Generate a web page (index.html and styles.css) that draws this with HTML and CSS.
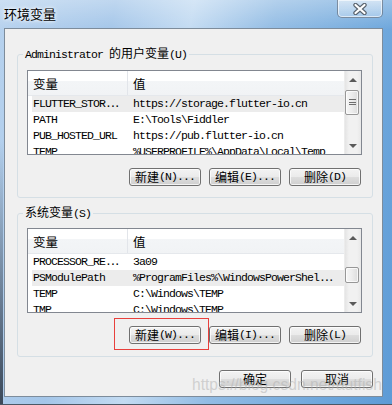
FILE: index.html
```html
<!DOCTYPE html>
<html lang="zh-CN">
<head>
    <meta charset="UTF-8">
    <meta name="viewport" content="width=device-width, initial-scale=1.0">
    <title>环境变量</title>
    <link rel="stylesheet" href="styles.css">
</head>
<body>
<div class="window">
    <div class="titlebar">
        <span class="title">环境变量</span>
        <div class="close-btn">
            <svg width="14" height="12" viewBox="0 0 14 12">
                <path d="M2.5 2 L11.5 10 M11.5 2 L2.5 10" stroke="#59636e" stroke-width="4.4" stroke-linecap="round" fill="none"/>
                <path d="M2.5 2 L11.5 10 M11.5 2 L2.5 10" stroke="#fff" stroke-width="2.2" stroke-linecap="round" fill="none"/>
            </svg>
        </div>
    </div>

    <div class="client">
        <!-- user variables -->
        <fieldset class="group group-user">
            <legend><span class="en">Administrator </span>的用户变量<span class="en">(U)</span></legend>
            <div class="list">
                <div class="list-body">
                    <div class="list-head">
                        <div class="col-name">变量</div>
                        <div class="col-val">值</div>
                    </div>
                    <div class="row selected">
                        <div class="col-name">FLUTTER_STOR<span class="dots">...</span></div>
                        <div class="col-val">https://storage.flutter-io.cn</div>
                    </div>
                    <div class="row">
                        <div class="col-name">PATH</div>
                        <div class="col-val">E:\Tools\Fiddler</div>
                    </div>
                    <div class="row">
                        <div class="col-name">PUB_HOSTED_URL</div>
                        <div class="col-val">https://pub.flutter-io.cn</div>
                    </div>
                    <div class="row">
                        <div class="col-name">TEMP</div>
                        <div class="col-val">%USERPROFILE%\AppData\Local\Temp</div>
                    </div>
                </div>
                <div class="scrollbar">
                    <div class="arrow"><span class="tri-up"></span></div>
                    <div class="thumb thumb-user"></div>
                    <div class="track"></div>
                    <div class="arrow"><span class="tri-down"></span></div>
                </div>
            </div>
            <div class="btn-row">
                <button class="btn">新建<span class="en">(N)...</span></button>
                <button class="btn">编辑<span class="en">(E)...</span></button>
                <button class="btn">删除<span class="en">(D)</span></button>
            </div>
        </fieldset>

        <!-- system variables -->
        <fieldset class="group group-sys">
            <legend>系统变量<span class="en">(S)</span></legend>
            <div class="list">
                <div class="list-body">
                    <div class="list-head">
                        <div class="col-name">变量</div>
                        <div class="col-val">值</div>
                    </div>
                    <div class="row">
                        <div class="col-name">PROCESSOR_RE<span class="dots">...</span></div>
                        <div class="col-val">3a09</div>
                    </div>
                    <div class="row selected">
                        <div class="col-name">PSModulePath</div>
                        <div class="col-val">%ProgramFiles%\WindowsPowerShel<span class="dots">...</span></div>
                    </div>
                    <div class="row">
                        <div class="col-name">TEMP</div>
                        <div class="col-val">C:\Windows\TEMP</div>
                    </div>
                    <div class="row">
                        <div class="col-name">TMP</div>
                        <div class="col-val">C:\Windows\TEMP</div>
                    </div>
                </div>
                <div class="scrollbar">
                    <div class="arrow"><span class="tri-up"></span></div>
                    <div class="thumb thumb-sys"></div>
                    <div class="track"></div>
                    <div class="arrow"><span class="tri-down"></span></div>
                </div>
            </div>
            <div class="btn-row">
                <div class="mark-wrap">
                    <button class="btn">新建<span class="en">(W)...</span></button>
                    <div class="mark"></div>
                </div>
                <button class="btn">编辑<span class="en">(I)...</span></button>
                <button class="btn">删除<span class="en">(L)</span></button>
            </div>
        </fieldset>

        <div class="dialog-btns">
            <button class="btn">确定</button>
            <button class="btn">取消</button>
        </div>
    </div>

    <div class="watermark">https://blog.csdn.net/autfish</div>
</div>
</body>
</html>
```

FILE: styles.css
```css
*{
    margin: 0;
    padding: 0;
    box-sizing: border-box;
}

body{
    width: 392px;
    height: 405px;
    overflow: hidden;
    background: #6aa4d9;
    font-family: "Noto Sans CJK SC", "Liberation Sans", sans-serif;
    font-size: 12px;
    color: #000;
}

.en{
    font-family: "Liberation Mono", "DejaVu Sans Mono", monospace;
    font-size: 11.5px;
    letter-spacing: -0.9px;
}

.dots{
    letter-spacing: -2.5px;
}

/* window frame */
.window{
    position: relative;
    width: 392px;
    height: 405px;
    display: flex;
    flex-direction: column;
    background:
        linear-gradient(180deg, transparent 0, transparent 35%, rgba(40, 50, 64, 0.85) 100%) left top / 3px 100% no-repeat,
        linear-gradient(180deg, rgba(255, 255, 255, 0.3), rgba(255, 255, 255, 0) 30px),
        linear-gradient(100deg, #b7d2ee 0%, #a4c6e9 25%, #c3dbf2 42%, #92bce4 60%, #6ea7dc 85%, #5d9bd6 100%);
    border-bottom: 1px solid #4b5866;
}

.titlebar{
    height: 28px;
    display: flex;
    justify-content: space-between;
    align-items: flex-start;
}

.title{
    padding-left: 4px;
    font-size: 13px;
    line-height: 27px;
    text-shadow: 0 0 5px #fff, 0 0 3px #fff;
}

.close-btn{
    width: 46px;
    height: 18px;
    margin-right: 9px;
    border: 1px solid rgba(70, 85, 105, 0.6);
    border-top: none;
    border-radius: 0 0 5px 5px;
    background: linear-gradient(rgba(255, 255, 255, 0.55), rgba(220, 235, 250, 0.35));
    box-shadow: inset 0 0 0 1px rgba(255, 255, 255, 0.6);
    display: flex;
    justify-content: center;
    align-items: center;
}

.client{
    height: 369px;
    margin: 0 9px 0 4px;
    border: 1px solid #7d8c9b;
    background: #f0f0f0;
    padding: 0 9px 0 12px;
}

/* group boxes */
.group{
    min-width: 0;
    border: 1px solid #d5dfe5;
    border-radius: 3px;
    padding: 8px 10px 11px 9px;
}

.group-user{
    margin-top: 17px;
}

.group-sys{
    margin-top: 7px;
    padding-top: 7px;
    padding-bottom: 12px;
}

.group legend{
    margin-left: -4px;
    padding: 0 2px;
    line-height: 14px;
}

/* list view */
.list{
    height: 85px;
    display: flex;
    border: 1px solid #828790;
    background: #fff;
}

.list-body{
    flex: 1;
    overflow: hidden;
}

.list-head{
    height: 25px;
    display: flex;
    background: linear-gradient(#fff 0, #fff 40%, #f3f5f7 40%, #f1f3f5 100%);
    border-bottom: 1px solid #e5e8ec;
    font-size: 12.5px;
    line-height: 25px;
}

.list-head .col-name{
    border-right: 1px solid #e2e5ea;
}

.row{
    height: 16px;
    display: flex;
    line-height: 16px;
    font-family: "Liberation Mono", "DejaVu Sans Mono", monospace;
    font-size: 11.5px;
    letter-spacing: -0.9px;
    white-space: nowrap;
}

.row.selected{
    background: linear-gradient(to right, transparent 4px, #ececec 4px);
}

.col-name{
    width: 100px;
    flex-shrink: 0;
    padding-left: 5px;
}

.col-val{
    padding-left: 5px;
}

/* scroll bar */
.scrollbar{
    width: 17px;
    display: flex;
    flex-direction: column;
    background: linear-gradient(90deg, #e4e4e4 0, #f1f1f1 25%, #f1f1f1 75%, #e8e8e8 100%);
    border-left: 1px solid #ececec;
}

.arrow{
    height: 17px;
    display: flex;
    justify-content: center;
    align-items: center;
}

.tri-up{
    border-left: 4px solid transparent;
    border-right: 4px solid transparent;
    border-bottom: 4px solid #5a5a5a;
}

.tri-down{
    border-left: 4px solid transparent;
    border-right: 4px solid transparent;
    border-top: 4px solid #5a5a5a;
}

.thumb{
    margin: 0 2px 0 0;
    border: 1px solid #979797;
    border-radius: 2px;
    background: linear-gradient(90deg, #f6f6f6 0, #ececec 50%, #dcdcdc 100%);
    box-shadow: inset 0 0 0 1px rgba(255, 255, 255, 0.7);
    display: flex;
    justify-content: center;
    align-items: center;
}

.thumb-user{
    margin-top: 2px;
    height: 25px;
}

.thumb-user::before{
    content: "";
    width: 7px;
    height: 8px;
    background: repeating-linear-gradient(#6e6e6e 0, #6e6e6e 1px, transparent 1px, transparent 2.6px);
}

.thumb-sys{
    margin-top: 21px;
    height: 16px;
}

.track{
    flex: 1;
}

/* buttons */
.btn-row{
    display: flex;
    justify-content: flex-end;
    gap: 8px;
    margin-top: 13px;
    padding-right: 1px;
}

.btn{
    width: 72px;
    height: 18px;
    border: 1px solid #707070;
    border-radius: 3px;
    background: linear-gradient(#f3f3f3 0%, #ebebeb 48%, #dddddd 52%, #cfcfcf 100%);
    box-shadow: inset 0 0 0 1px rgba(255, 255, 255, 0.75);
    font-family: inherit;
    font-size: 12px;
    line-height: 16px;
    color: #000;
    display: flex;
    justify-content: center;
    align-items: center;
}

.mark-wrap{
    position: relative;
}

.mark{
    position: absolute;
    left: -15px;
    top: -8px;
    width: 95px;
    height: 32px;
    border: 1px solid #e8403c;
}

.dialog-btns{
    display: flex;
    justify-content: flex-end;
    gap: 10px;
    margin-top: 13px;
}

.watermark{
    position: absolute;
    left: 192px;
    top: 376px;
    font-family: "Liberation Sans", Arial, sans-serif;
    font-size: 15.6px;
    color: rgba(175, 175, 175, 0.5);
    white-space: nowrap;
}
```
